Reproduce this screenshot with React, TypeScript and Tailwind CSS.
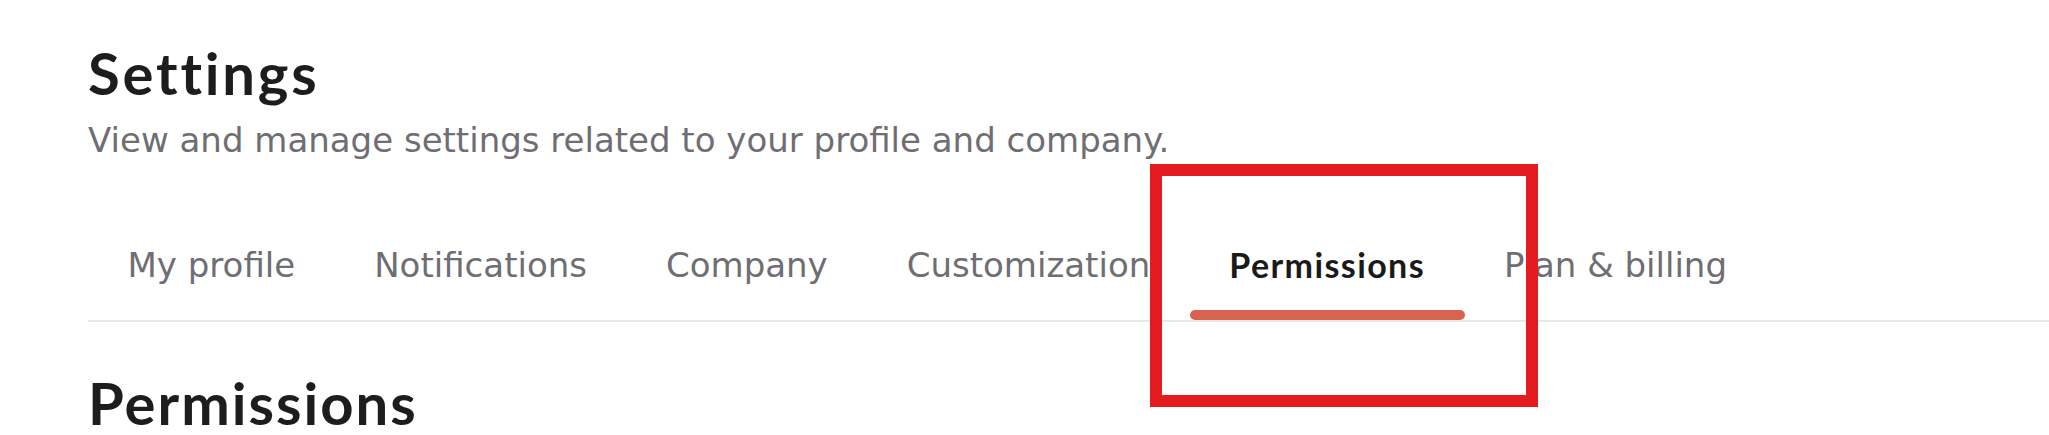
import React from "react";

const tabs = [
  "My profile",
  "Notifications",
  "Company",
  "Customization",
  "Permissions",
  "Plan & billing",
];

export default function App() {
  const active = "Permissions";

  return (
    <div className="relative h-[435px] w-full overflow-hidden bg-white font-['Lato',sans-serif]">
      <div className="pl-[88px] pt-[44px]">
        <h1 className="text-[58px] font-bold leading-[58px] tracking-[2.8px] text-[#1d1d1f]">Settings</h1>
        <p className="mt-[21px] font-['DejaVu_Sans',sans-serif] text-[34px] leading-[34px] text-[#6e6e73]">
          View and manage settings related to your profile and company.
        </p>
      </div>

      <div className="ml-[88px] mt-[91px] flex border-b-2 border-[#e8e8e8]">
        {tabs.map((t) => (
          <div key={t} className="flex flex-col px-[39.5px]">
            <span
              className={
                t === active
                  ? "text-[34px] font-bold leading-[34px] tracking-[1.4px] text-[#1a1a1a]"
                  : "font-['DejaVu_Sans',sans-serif] text-[34px] leading-[34px] text-[#6e6e73]"
              }
            >
              {t}
            </span>
            <div
              className={
                t === active
                  ? "-mx-[39.5px] mt-[28px] h-[10px] rounded-full bg-[#d8634f]"
                  : "-mx-[39.5px] mt-[28px] h-[10px]"
              }
            />
          </div>
        ))}
      </div>

      <h2 className="ml-[88px] mt-[52px] text-[58px] font-bold leading-[58px] tracking-[2px] text-[#1d1d1f]">
        Permissions
      </h2>

      {/* highlight box */}
      <div className="absolute left-[1150px] top-[164px] h-[243px] w-[388px] border-[12px] border-[#e51c1f]" />
    </div>
  );
}
